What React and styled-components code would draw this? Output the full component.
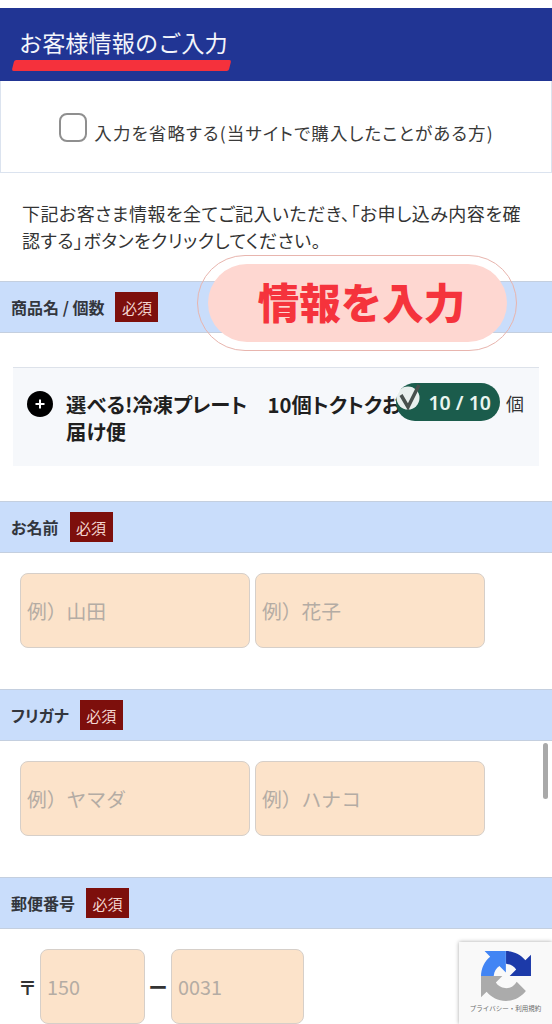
import React from "react";
import styled, { createGlobalStyle } from "styled-components";

const Global = createGlobalStyle`
  html, body { margin: 0; padding: 0; background: #fff; }
  body { font-family: "Noto Sans CJK JP", "Noto Sans", sans-serif; color: #333; }
  * { box-sizing: border-box; }
`;

const Page = styled.div`
  position: relative;
  width: 552px;
  height: 1024px;
  overflow: hidden;
  padding-top: 8px;
  background: #fff;
`;

const Header = styled.header`
  height: 73px;
  background: #213594;
  padding: 18px 0 0 19px;
  position: relative;
`;

const Title = styled.h1`
  margin: 0;
  font-size: 23.2px;
  line-height: 32px;
  font-weight: 400;
  color: #f4f5fb;
`;

const TitleLine = styled.div`
  position: absolute;
  left: 13px;
  top: 52px;
  width: 217px;
  height: 11px;
  background: #f5313c;
  border-radius: 2px;
  transform: skewX(-14deg);
`;

const SkipBox = styled.div`
  height: 92px;
  border: 1px solid #dbe3ef;
  border-top: 0;
  display: flex;
  align-items: center;
  justify-content: center;
  gap: 7px;
  padding-left: 1px;
`;

const Check = styled.span`
  width: 28px;
  height: 29px;
  border: 2px solid #8f8f8f;
  border-radius: 8px;
  background: #fff;
  margin-top: 2px;
`;

const SkipText = styled.span`
  font-size: 17.5px;
  line-height: 24px;
  margin-top: 12px;
  color: #3a3a3a;
  font-feature-settings: "palt";
  letter-spacing: 1.1px;
`;

const Lead = styled.p`
  margin: 27px 0 27px 22px;
  width: 510px;
  font-size: 18px;
  line-height: 27px;
  color: #333;
  font-feature-settings: "palt";
  letter-spacing: 0.5px;
`;

const SectionHead = styled.div`
  height: 52px;
  background: #c9ddfb;
  border-top: 1px solid #c4cfdf;
  border-bottom: 1px solid #c4cfdf;
  display: flex;
  align-items: center;
  gap: 11px;
  padding-left: 11px;
`;

const SectionLabel = styled.span`
  font-size: 16px;
  font-weight: 700;
  color: #33363d;
  line-height: 20px;
  font-feature-settings: "palt";
`;

const Badge = styled.span`
  width: 43px;
  height: 30px;
  background: #7d0f0c;
  color: #f3d6d0;
  font-size: 15px;
  display: flex;
  align-items: center;
  justify-content: center;
`;

const ProductBox = styled.div`
  margin: 34px 13px 35px;
  height: 99px;
  background: #f6f8fb;
  border-top: 1px solid #dde2ea;
  position: relative;
  display: flex;
  padding: 23px 0 0 14px;
`;

const PlusCircle = styled.span`
  width: 26px;
  height: 26px;
  flex: none;
  border-radius: 50%;
  background: #000;
  color: #fff;
  display: flex;
  align-items: center;
  justify-content: center;
  margin-right: 13px;
`;

const ProductName = styled.div`
  width: 340px;
  font-size: 20.3px;
  font-weight: 700;
  line-height: 27px;
  color: #1f1f1f;
  font-feature-settings: "palt";
`;

const CountPill = styled.div`
  position: absolute;
  left: 383px;
  top: 15px;
  width: 104px;
  height: 38px;
  border-radius: 19px;
  background: #1b5c4c;
  color: #e9f5ef;
  font-size: 19.5px;
  font-weight: 600;
  display: flex;
  align-items: center;
  justify-content: flex-end;
  padding-right: 9px;
  font-family: "Noto Sans", sans-serif;
`;

const CheckMark = styled.svg`
  position: absolute;
  left: 0;
  top: 1px;
`;

const Unit = styled.span`
  position: absolute;
  left: 493px;
  top: 22px;
  font-size: 18px;
  line-height: 27px;
  color: #333;
`;

const FieldRow = styled.div`
  display: flex;
  align-items: flex-start;
  gap: ${(p) => p.$gap ?? 5}px;
  padding: 20px 0 0 20px;
  height: ${(p) => p.$h ?? 136}px;
`;

const Field = styled.div`
  flex: none;
  width: ${(p) => p.$w ?? 230}px;
  height: 75px;
  background: #fce3ca;
  border: 1.5px solid #d6cfc9;
  border-radius: 8px;
  display: flex;
  align-items: center;
  padding-left: 6px;
  font-size: 19.8px;
  color: #b4aca4;
`;

const Symbol = styled.span`
  width: ${(p) => p.$w}px;
  margin-left: ${(p) => p.$shift ?? 0}px;
  font-size: 19px;
  font-weight: 700;
  color: #333;
  line-height: 75px;
  flex: none;
  text-align: center;
`;

const Overlay = styled.div`
  position: absolute;
  left: 197px;
  top: 255px;
  width: 320px;
  height: 96px;
  border: 1.5px solid #e8b5ae;
  border-radius: 48px;
  display: flex;
  align-items: center;
  justify-content: center;
`;

const OverlayInner = styled.div`
  width: 299px;
  height: 78px;
  border-radius: 39px;
  background: #fed7d1;
  color: #f5333c;
  font-size: 41.5px;
  font-weight: 900;
  display: flex;
  align-items: center;
  justify-content: center;
  padding: 0 0 4px 9px;
`;

const ScrollThumb = styled.div`
  position: absolute;
  left: 543px;
  top: 743px;
  width: 5px;
  height: 56px;
  border-radius: 3px;
  background: #a9a9a9;
`;

const Recaptcha = styled.div`
  position: absolute;
  left: 459px;
  top: 942px;
  width: 93px;
  height: 82px;
  background: #f9f9f9;
  box-shadow: 0 0 4px rgba(0, 0, 0, 0.35);
  display: flex;
  flex-direction: column;
  align-items: center;
  padding-top: 9px;
`;

const RecaptchaText = styled.span`
  font-size: 6.5px;
  line-height: 10px;
  color: #6b6b6b;
  margin-top: 2px;
  white-space: nowrap;
`;

const Section = ({ label, children }) => (
  <>
    <SectionHead>
      <SectionLabel>{label}</SectionLabel>
      <Badge>必須</Badge>
    </SectionHead>
    {children}
  </>
);

export default function App() {
  return (
    <Page>
      <Global />
      <Header>
        <Title>お客様情報のご入力</Title>
        <TitleLine />
      </Header>
      <SkipBox>
        <Check />
        <SkipText>入力を省略する(当サイトで購入したことがある方)</SkipText>
      </SkipBox>
      <Lead>下記お客さま情報を全てご記入いただき、「お申し込み内容を確認する」ボタンをクリックしてください。</Lead>

      <Section label="商品名 / 個数">
        <ProductBox>
          <PlusCircle>
            <svg width="12" height="12" viewBox="0 0 12 12">
              <path d="M6 1.5v9M1.5 6h9" stroke="#fff" strokeWidth="2" />
            </svg>
          </PlusCircle>
          <ProductName>選べる!冷凍プレート　10個トクトクお届け便</ProductName>
          <CountPill>
            <CheckMark width="28" height="30" viewBox="0 0 28 30">
              <circle cx="12" cy="14" r="11.5" fill="#fff" fillOpacity="0.9" />
              <path d="M5 11l7 12L23 1" fill="none" stroke="#48504d" strokeWidth="3.5" />
            </CheckMark>
            10 / 10
          </CountPill>
          <Unit>個</Unit>
        </ProductBox>
      </Section>

      <Section label="お名前">
        <FieldRow>
          <Field>例）山田</Field>
          <Field>例）花子</Field>
        </FieldRow>
      </Section>

      <Section label="フリガナ">
        <FieldRow>
          <Field>例）ヤマダ</Field>
          <Field>例）ハナコ</Field>
        </FieldRow>
      </Section>

      <Section label="郵便番号">
        <FieldRow $gap={2} $h={95}>
          <Symbol $w={21} $shift={-3}>〒</Symbol>
          <Field $w={105}>150</Field>
          <Symbol $w={22}>ー</Symbol>
          <Field $w={133}>0031</Field>
        </FieldRow>
      </Section>

      <Overlay>
        <OverlayInner>情報を入力</OverlayInner>
      </Overlay>
      <ScrollThumb />
      <Recaptcha>
        <svg width="50" height="50" viewBox="0 0 64 64">
          <path d="M64 31.955l-.033-1.37V4.687l-7.16 7.16C50.948 4.674 42.033.093 32.05.093v16.37c.485 0 .86.057 1.135.163 4.976.393 9.288 3.14 11.828 7.124l-8.307 8.307 26.296.006" fill="#1c3aa9" />
          <path d="M31.862.094l-1.37.033H4.594l7.16 7.16C4.58 13.147 0 22.06 0 32.046h16.26c0-.485.057-.86.163-1.135.393-4.976 3.14-9.288 7.124-11.828l8.307 8.307.006-26.296" fill="#4285f4" />
          <path d="M.001 32.045l.033 1.37v25.898l7.16-7.16c5.86 7.173 14.774 11.754 24.76 11.754 10.394 0 19.62-4.96 25.456-12.64l-11.736-11.86a15.55 15.55 0 0 1-4.754 5.334c-2.05 1.6-4.952 2.906-8.968 2.906-.485 0-.86-.057-1.135-.163-4.976-.393-9.288-3.14-11.828-7.124l8.307-8.307-26.296.006" fill="#ababab" />
        </svg>
        <RecaptchaText>プライバシー・利用規約</RecaptchaText>
      </Recaptcha>
    </Page>
  );
}
